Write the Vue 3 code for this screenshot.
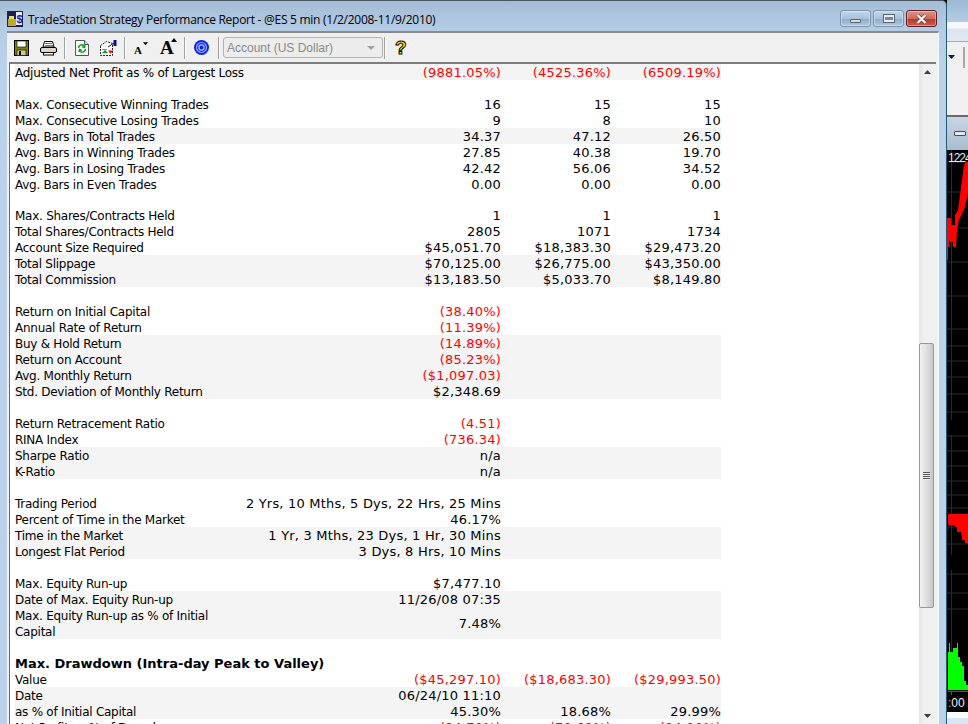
<template>
  <div class="desktop">
    <div class="window">
      <div class="titlebar">
        <svg class="app-icon" width="16" height="16" viewBox="0 0 16 16">
          <rect x="0" y="0" width="16" height="16" fill="#20204a" />
          <rect x="1" y="8" width="8" height="7" fill="#b8b020" />
          <rect x="2" y="5" width="5" height="3" fill="#e8e060" />
          <rect x="9" y="1" width="6" height="13" fill="#e8e8f8" />
          <text x="9.5" y="12" font-size="11" font-weight="700" fill="#2020c0" font-family="Liberation Sans">$</text>
        </svg>
        <span class="title-text">TradeStation Strategy Performance Report - @ES 5 min (1/2/2008-11/9/2010)</span>
        <div class="caption-btns">
          <div class="cap-btn"><span class="cap-min"></span></div>
          <div class="cap-btn"><span class="cap-max"></span></div>
          <div class="cap-btn cap-close">
            <svg width="13" height="10" viewBox="0 0 13 10">
              <path d="M2.5 1 L10.5 9 M10.5 1 L2.5 9" stroke="#6a3a3a" stroke-width="3.6" />
              <path d="M2.5 1 L10.5 9 M10.5 1 L2.5 9" stroke="#f4f0f0" stroke-width="2.4" />
            </svg>
          </div>
        </div>
      </div>

      <div class="client">
        <div class="toolbar">
          <svg class="tb-icon ic-save" width="15" height="16" viewBox="0 0 15 16">
            <rect x="0.5" y="0.5" width="14" height="15" fill="#808000" stroke="#000" />
            <rect x="3" y="1" width="9" height="6" fill="#fff" stroke="#000" stroke-width="0.6" />
            <rect x="3" y="10" width="9" height="5.5" fill="#c8c8a0" stroke="#000" stroke-width="0.6" />
            <rect x="5" y="11" width="2" height="4" fill="#000" />
          </svg>
          <svg class="tb-icon ic-print" width="17" height="16" viewBox="0 0 17 16">
            <path d="M4.5 1.5 H12.5 L14 7 H3 Z" fill="#fff" stroke="#000" />
            <path d="M5 3.5 H12 M5 5.5 H13" stroke="#777" />
            <rect x="0.5" y="7.5" width="16" height="5" rx="1.5" fill="#d8d8d8" stroke="#000" />
            <rect x="8" y="9" width="4" height="1.5" fill="#f0e040" />
            <rect x="3.5" y="12.5" width="10" height="2.5" fill="#fff" stroke="#000" />
          </svg>
          <span class="sep sep-a"></span>
          <svg class="tb-icon ic-refresh" width="14" height="16" viewBox="0 0 14 16">
            <path d="M0.5 0.5 H9.5 L13.5 4.5 V15.5 H0.5 Z" fill="#fff" stroke="#555" />
            <path d="M9.5 0.5 V4.5 H13.5" fill="#ddd" stroke="#555" />
            <path d="M3.5 8 A3.5 3.5 0 0 1 9 5.5 M10 5 L9.5 7.5 L7.2 6.5" fill="none" stroke="#0a9a20" stroke-width="1.5" />
            <path d="M10.5 9 A3.5 3.5 0 0 1 5 11.5 M4 12 L4.5 9.5 L6.8 10.5" fill="none" stroke="#0a9a20" stroke-width="1.5" />
          </svg>
          <svg class="tb-icon ic-report" width="17" height="16" viewBox="0 0 17 16">
            <path d="M0.5 5.5 L6.5 1.5 L12.5 3.5 V15.5 H0.5 Z" fill="#fff" stroke="#222" stroke-dasharray="2 1" />
            <rect x="2" y="9" width="5" height="1" fill="#888" />
            <path d="M2 13 L5 10 L8 13 Z" fill="#109020" />
            <path d="M8 10.5 H13 L10.5 14 Z" fill="#e01010" />
            <rect x="13.5" y="0" width="3" height="6" fill="#101090" />
            <path d="M8 7 L14 3" stroke="#222" />
          </svg>
          <span class="sep sep-b"></span>
          <div class="font-btn font-small">
            <span>A</span>
            <svg width="6" height="4" viewBox="0 0 6 4"><path d="M0 0 H6 L3 3.5 Z" fill="#000" /></svg>
          </div>
          <div class="font-btn font-big">
            <span>A</span>
            <svg width="6" height="4" viewBox="0 0 6 4"><path d="M0 4 H6 L3 0 Z" fill="#000" /></svg>
          </div>
          <span class="sep sep-c"></span>
          <svg class="tb-icon ic-target" width="15" height="15" viewBox="0 0 15 15">
            <circle cx="7.5" cy="7.5" r="7.5" fill="#0a1ef0" />
            <circle cx="7.5" cy="7.5" r="5" fill="none" stroke="#8fb0ff" stroke-width="1.2" />
            <circle cx="7.5" cy="7.5" r="2.6" fill="none" stroke="#b8ccff" stroke-width="1.2" />
          </svg>
          <span class="sep sep-d"></span>
          <div class="combo">
            <span>Account (US Dollar)</span>
            <svg width="8" height="4" viewBox="0 0 8 4"><path d="M0 0 H8 L4 4 Z" fill="#a0a0a0" /></svg>
          </div>
          <span class="sep sep-e"></span>
          <span class="help">?</span>
        </div>

        <div class="content">
          <div class="report">
            <template v-for="(row, i) in rows" :key="i">
              <div v-if="row.gap" class="gap" :style="{ height: row.gap + 'px' }"></div>
              <div v-else-if="row.head" class="line head"><span>{{ row.head }}</span></div>
              <div v-else class="line" :class="{ shaded: row.s }">
                <div class="label">{{ row.l }}</div>
                <div v-for="(v, j) in row.v" :key="j" class="val" :class="{ neg: v.startsWith('(') }">{{ v }}</div>
              </div>
            </template>
          </div>
          <div class="scrollbar">
            <svg class="arrow" width="7" height="4" viewBox="0 0 7 4"><path d="M0 4 H7 L3.5 0 Z" fill="#404040" /></svg>
            <div class="track-top"></div>
            <div class="thumb">
              <span class="grip"></span>
            </div>
            <div class="track-bottom"></div>
            <svg class="arrow" width="7" height="4" viewBox="0 0 7 4"><path d="M0 0 H7 L3.5 4 Z" fill="#404040" /></svg>
          </div>
        </div>
      </div>
    </div>

    <div class="side">
      <div class="side-glass"></div>
      <div class="side-white"></div>
      <div class="side-tool">
        <svg class="side-arrow" width="7" height="4" viewBox="0 0 7 4"><path d="M0 0 H7 L3.5 4 Z" fill="#10107a" /></svg>
        <span class="side-sep"></span>
      </div>
      <div class="side-title"><span class="side-min"></span></div>
      <div class="chart">
        <svg class="chart-svg" width="21" height="562" viewBox="0 0 21 562">
          <g stroke="#2a2a2a">
            <path d="M0 12H21M0 42H21M0 78H21M0 112H21M0 146H21M0 179H21M0 196H21M0 211H21M0 227H21M0 244H21M0 262H21M0 286H21M0 301H21M0 316H21M0 331H21M0 345H21M0 358H21M0 377H21M0 394H21M0 424H21M0 443H21M0 459H21" />
            <path d="M4.5 0V270M4.5 285V405M4.5 420V540" />
          </g>
          <path d="M0 68 H4 V75 H8 V65 L11 60 L17 15 L19 12 H21 V42 L18 57 L12 70 L10 80 L9 97 H6 V92 H3 V90 H2 V97 H1 V110 H0 Z" fill="#ff0000" />
          <path d="M1 364 H21 V393 H18 V390 H15 V388 L14 382 H10 V377 H9 L7 375 H1 Z" fill="#ff0000" />
          <path d="M1 502 H2 V493 H3 V502 H6 V498 H10 V493 H11 V507 H13 V512 H15 V516 H17 V531 H19 V535 H21 V540 H1 Z" fill="#00ff00" />
          <path d="M1 541.5 H21" stroke="#d02020" />
          <path d="M4.5 542 V545" stroke="#d02020" />
        </svg>
        <span class="chart-top">1224</span>
        <span class="chart-time"><i>:</i>00</span>
      </div>
      <div class="side-bottom"></div>
    </div>
  </div>
</template>

<script setup>
const rows = [
  { s: 1, l: 'Adjusted Net Profit as % of Largest Loss', v: ['(9881.05%)', '(4525.36%)', '(6509.19%)'] },
  { gap: 16 },
  { l: 'Max. Consecutive Winning Trades', v: ['16', '15', '15'] },
  { l: 'Max. Consecutive Losing Trades', v: ['9', '8', '10'] },
  { s: 1, l: 'Avg. Bars in Total Trades', v: ['34.37', '47.12', '26.50'] },
  { l: 'Avg. Bars in Winning Trades', v: ['27.85', '40.38', '19.70'] },
  { l: 'Avg. Bars in Losing Trades', v: ['42.42', '56.06', '34.52'] },
  { l: 'Avg. Bars in Even Trades', v: ['0.00', '0.00', '0.00'] },
  { gap: 15 },
  { l: 'Max. Shares/Contracts Held', v: ['1', '1', '1'] },
  { l: 'Total Shares/Contracts Held', v: ['2805', '1071', '1734'] },
  { l: 'Account Size Required', v: ['$45,051.70', '$18,383.30', '$29,473.20'] },
  { s: 1, l: 'Total Slippage', v: ['$70,125.00', '$26,775.00', '$43,350.00'] },
  { s: 1, l: 'Total Commission', v: ['$13,183.50', '$5,033.70', '$8,149.80'] },
  { gap: 16 },
  { l: 'Return on Initial Capital', v: ['(38.40%)'] },
  { l: 'Annual Rate of Return', v: ['(11.39%)'] },
  { s: 1, l: 'Buy & Hold Return', v: ['(14.89%)'] },
  { s: 1, l: 'Return on Account', v: ['(85.23%)'] },
  { s: 1, l: 'Avg. Monthly Return', v: ['($1,097.03)'] },
  { s: 1, l: 'Std. Deviation of Monthly Return', v: ['$2,348.69'] },
  { gap: 16 },
  { l: 'Return Retracement Ratio', v: ['(4.51)'] },
  { l: 'RINA Index', v: ['(736.34)'] },
  { s: 1, l: 'Sharpe Ratio', v: ['n/a'] },
  { s: 1, l: 'K-Ratio', v: ['n/a'] },
  { gap: 16 },
  { l: 'Trading Period', v: ['2 Yrs, 10 Mths, 5 Dys, 22 Hrs, 25 Mins'] },
  { l: 'Percent of Time in the Market', v: ['46.17%'] },
  { s: 1, l: 'Time in the Market', v: ['1 Yr, 3 Mths, 23 Dys, 1 Hr, 30 Mins'] },
  { s: 1, l: 'Longest Flat Period', v: ['3 Dys, 8 Hrs, 10 Mins'] },
  { gap: 16 },
  { l: 'Max. Equity Run-up', v: ['$7,477.10'] },
  { s: 1, l: 'Date of Max. Equity Run-up', v: ['11/26/08 07:35'] },
  { s: 1, l: 'Max. Equity Run-up as % of Initial\nCapital', v: ['7.48%'] },
  { gap: 16 },
  { head: 'Max. Drawdown (Intra-day Peak to Valley)' },
  { l: 'Value', v: ['($45,297.10)', '($18,683.30)', '($29,993.50)'] },
  { s: 1, l: 'Date', v: ['06/24/10 11:10'] },
  { s: 1, l: 'as % of Initial Capital', v: ['45.30%', '18.68%', '29.99%'] },
  { l: 'Net Profit as % of Drawdown', v: ['(84.70%)', '(70.69%)', '(84.00%)'] }
]
</script>

<style>
html, body {
  margin: 0;
  overflow: hidden;
}
</style>

<style scoped>
.desktop {
  display: flex;
  width: 968px;
  height: 724px;
  overflow: hidden;
  background: #000;
}

.window {
  width: 947px;
  flex: none;
  height: 724px;
  box-sizing: border-box;
  display: flex;
  flex-direction: column;
  background: linear-gradient(#a4bdd6 0, #b4cce4 30px, #b9d1ea 60px);
  border-top: 1px solid #4a5560;
  border-right: 1px solid #1f5a70;
  border-top-right-radius: 5px;
}

.titlebar {
  height: 30px;
  flex: none;
  display: flex;
  align-items: center;
  padding-left: 7px;
  box-sizing: border-box;
}

.app-icon {
  flex: none;
  margin-top: 6px;
}

.title-text {
  margin-left: 5px;
  margin-top: 6px;
  font: 12px "Open Sans", sans-serif;
  letter-spacing: -0.27px;
  color: #000;
  white-space: nowrap;
}

.caption-btns {
  margin-left: auto;
  margin-right: 9px;
  margin-top: 5px;
  display: flex;
  gap: 2px;
}

.cap-btn {
  width: 29px;
  height: 15px;
  border: 1px solid #7a92aa;
  border-radius: 3px;
  background: linear-gradient(#c2d6ea 0, #a8c2dc 50%, #8fabc8 52%, #b0c8e0 100%);
  display: flex;
  align-items: center;
  justify-content: center;
  box-shadow: inset 0 0 0 1px rgba(255, 255, 255, 0.35);
}

.cap-close {
  border-color: #5a2030;
  background: linear-gradient(#dd9488 0, #cc6a5c 50%, #b03828 52%, #cc6050 100%);
}

.cap-min {
  width: 9px;
  height: 2px;
  margin-top: 4px;
  background: #d8d8dc;
  border: 1px solid #5a6470;
  border-radius: 1px;
}

.cap-max {
  width: 8px;
  height: 3px;
  background: #6f8cab;
  border: 1px solid #e8eef4;
  border-width: 2px 1px;
  outline: 1px solid #5a6470;
}

.client {
  flex: 1;
  min-height: 0;
  margin-left: 7px;
  margin-right: 7px;
  display: flex;
  flex-direction: column;
  background: #f0f0f0;
  border-top: 2px solid #8a8a8a;
  border-right: 1px solid #f4f8fc;
}

.toolbar {
  height: 29px;
  flex: none;
  display: flex;
  align-items: center;
  box-sizing: border-box;
}

.tb-icon {
  flex: none;
  display: block;
}

.ic-save { margin-left: 7px; }
.ic-print { margin-left: 11px; }
.ic-refresh { margin-left: 10px; }
.ic-report { margin-left: 11px; }
.ic-target { margin-left: 9px; }

.sep {
  flex: none;
  width: 1px;
  height: 22px;
  background: #a0a0a0;
  box-shadow: 1px 0 0 #fff;
}

.sep-a { margin-left: 7px; }
.sep-b { margin-left: 7px; }
.sep-c { margin-left: 6px; }
.sep-d { margin-left: 9px; }
.sep-e { margin-left: 1px; }

.font-btn {
  flex: none;
  display: flex;
  align-items: flex-start;
  font-family: "Liberation Serif", serif;
  font-weight: 700;
  color: #000;
  line-height: 1;
}

.font-small {
  margin-left: 9px;
  width: 14px;
  font-size: 11px;
}

.font-small span { margin-top: 5px; }
.font-small svg { margin-top: 2px; margin-left: 1px; }

.font-big {
  margin-left: 12px;
  width: 18px;
  font-size: 19px;
}

.font-big svg { margin-left: -3px; }

.combo {
  flex: none;
  box-sizing: border-box;
  width: 160px;
  height: 21px;
  margin-left: 4px;
  padding: 0 7px 0 3px;
  display: flex;
  align-items: center;
  justify-content: space-between;
  border: 1px solid #b4b4b4;
  border-radius: 3px;
  background: #ececec;
  color: #8a8a8a;
  font: 12px "Liberation Sans", sans-serif;
}

.help {
  flex: none;
  margin-left: 10px;
  font: 700 19px "Liberation Sans", sans-serif;
  color: #ffff00;
  -webkit-text-stroke: 1px #000;
  line-height: 1;
}

.content {
  flex: 1;
  min-height: 0;
  display: flex;
  background: #fff;
  border-top: 2px solid #7d7d7d;
  border-left: 1px solid #6a6a6a;
  margin-left: 2px;
  margin-right: 2px;
}

.report {
  flex: 1;
  min-width: 0;
  padding-left: 5px;
  overflow: hidden;
  font: 12px "DejaVu Sans", sans-serif;
  color: #000;
}

.line {
  display: grid;
  grid-template-columns: 230px 256px 110px 110px;
  width: 706px;
  align-items: center;
  min-height: 16px;
  line-height: 16px;
}

.label {
  letter-spacing: -0.26px;
  white-space: pre-line;
  transform: translateY(1px);
}

.shaded {
  background: #f4f4f4;
}

.head {
  display: block;
  font-size: 13px;
  font-weight: 700;
}

.head span {
  display: block;
  transform: translateY(1px);
}

.val {
  font-size: 13px;
  letter-spacing: 0.2px;
  text-align: right;
  white-space: nowrap;
  transform: translateY(1px);
}

.neg {
  color: #ff0000;
}

.scrollbar {
  width: 17px;
  flex: none;
  display: flex;
  flex-direction: column;
  align-items: center;
  background: linear-gradient(90deg, #e4e4e4, #f0f0f0 30%, #f0f0f0);
  overflow: hidden;
}

.arrow {
  flex: none;
  margin: 6px 0;
}

.track-top {
  height: 263px;
  flex: none;
}

.thumb {
  flex: none;
  box-sizing: border-box;
  width: 15px;
  height: 265px;
  align-self: flex-start;
  border: 1px solid #979797;
  border-radius: 2px;
  background: linear-gradient(90deg, #f2f2f2, #dcdcdc 55%, #c6c6c6);
  display: flex;
  align-items: center;
  justify-content: center;
}

.grip {
  width: 7px;
  height: 8px;
  background: repeating-linear-gradient(#555 0 1px, #eee 1px 2px);
}

.track-bottom {
  flex: 1;
}

.side {
  flex: 1;
  min-width: 0;
  display: flex;
  flex-direction: column;
  background: #000;
}

.side-glass {
  height: 22px;
  flex: none;
  background: linear-gradient(#9db8d2, #b4cde6);
}

.side-white {
  height: 20px;
  flex: none;
  background: linear-gradient(#f6f8fb 0, #f6f8fb 6px, #dde4f0 7px, #e2e8f3 100%);
  border-bottom: 1px solid #a8a8a8;
  box-sizing: border-box;
}

.side-tool {
  height: 75px;
  flex: none;
  box-sizing: border-box;
  display: flex;
  align-items: flex-start;
  padding-left: 1px;
  background: #f0f0f0;
  border-bottom: 2px solid #6a6a6a;
}

.side-arrow {
  flex: none;
  margin-top: 13px;
}

.side-sep {
  flex: none;
  width: 2px;
  height: 21px;
  margin-top: 5px;
  margin-left: 8px;
  background: #a8a8a8;
}

.side-title {
  height: 33px;
  flex: none;
  padding-left: 7px;
  display: flex;
  align-items: center;
  background: linear-gradient(#c8d4e2, #a8bccf);
}

.side-min {
  width: 10px;
  height: 3px;
  background: #e8e8ec;
  border: 1px solid #4a4a50;
  border-radius: 1px;
}

.chart {
  position: relative;
  flex: none;
  height: 562px;
  background: #000;
}

.chart-top {
  position: absolute;
  left: 1px;
  top: 1px;
  font: 12px "Liberation Sans", sans-serif;
  letter-spacing: -1px;
  color: #e8f0ff;
  white-space: nowrap;
}

.chart-svg {
  position: absolute;
  left: 0;
  top: 0;
  display: block;
}

.chart-time {
  position: absolute;
  left: 1px;
  top: 546px;
  font: 12px "Liberation Sans", sans-serif;
  color: #e8f0ff;
}

.chart-time i {
  font-style: normal;
  color: #e0a040;
}

.side-bottom {
  flex: 1;
  background: linear-gradient(#fff 0, #fff 50%, #dbe6f2 50%);
}
</style>
